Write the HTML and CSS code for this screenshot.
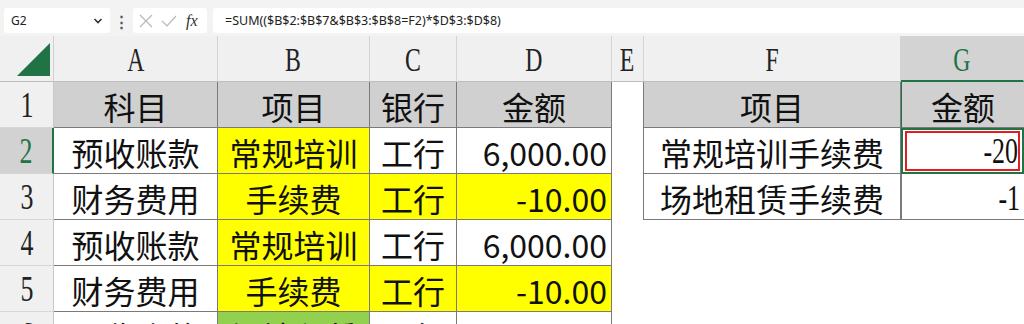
FILE: index.html
```html
<!DOCTYPE html>
<html>
<head>
<meta charset="utf-8">
<link rel="stylesheet" href="styles.css">
</head>
<body>
<div class="app">
  <div class="toolbar">
    <div class="namebox"><span>G2</span>
      <svg class="chev" width="10" height="8" viewBox="0 0 10 8"><path d="M1.5 2 L5 5.5 L8.5 2" fill="none" stroke="#333" stroke-width="1.6"/></svg>
    </div>
    <div class="dots">⋮</div>
    <div class="fxbox">
      <svg width="16" height="16" viewBox="0 0 16 16"><path d="M2 2 L14 14 M14 2 L2 14" stroke="#b8b8b8" stroke-width="1.2" fill="none"/></svg>
      <svg width="18" height="16" viewBox="0 0 18 16"><path d="M2 8 L7 13 L16 3" stroke="#b8b8b8" stroke-width="1.2" fill="none"/></svg>
      <span class="fx">fx</span>
    </div>
    <div class="formula">=SUM(($B$2:$B$7&amp;$B$3:$B$8=F2)*$D$3:$D$8)</div>
  </div>
  <div class="sheet">
    <div class="corner"><svg width="36" height="36" viewBox="0 0 36 36"><path d="M34 1 L34 34 L1 34 Z" fill="#217346"/></svg></div>
    <div class="ch"><span class="sl">A</span></div>
    <div class="ch"><span class="sl">B</span></div>
    <div class="ch"><span class="sl">C</span></div>
    <div class="ch"><span class="sl">D</span></div>
    <div class="ch"><span class="sl">E</span></div>
    <div class="ch"><span class="sl">F</span></div>
    <div class="ch ch-sel"><span class="sl">G</span></div>

    <div class="rh"><span class="sl">1</span></div>
    <div class="c hd">科目</div>
    <div class="c hd">项目</div>
    <div class="c hd">银行</div>
    <div class="c hd">金额</div>
    <div class="c blank e"></div>
    <div class="c hd f">项目</div>
    <div class="c hd g gsel1">金额</div>

    <div class="rh rh-sel"><span class="sl">2</span></div>
    <div class="c">预收账款</div>
    <div class="c yel">常规培训</div>
    <div class="c">工行</div>
    <div class="c num">6,000.00</div>
    <div class="c blank e"></div>
    <div class="c f">常规培训手续费</div>
    <div class="c g active"><span class="redbox"><span class="sl">-20</span></span></div>

    <div class="rh"><span class="sl">3</span></div>
    <div class="c">财务费用</div>
    <div class="c yel">手续费</div>
    <div class="c yel">工行</div>
    <div class="c num yel">-10.00</div>
    <div class="c blank e"></div>
    <div class="c f">场地租赁手续费</div>
    <div class="c g gnum"><span class="sl">-1</span></div>

    <div class="rh"><span class="sl">4</span></div>
    <div class="c">预收账款</div>
    <div class="c yel">常规培训</div>
    <div class="c">工行</div>
    <div class="c num">6,000.00</div>
    <div class="c blank"></div>
    <div class="c blank"></div>
    <div class="c blank"></div>

    <div class="rh"><span class="sl">5</span></div>
    <div class="c">财务费用</div>
    <div class="c yel">手续费</div>
    <div class="c yel">工行</div>
    <div class="c num yel">-10.00</div>
    <div class="c blank"></div>
    <div class="c blank"></div>
    <div class="c blank"></div>

    <div class="rh"><span class="sl">6</span></div>
    <div class="c">预收账款</div>
    <div class="c grn">场地租赁</div>
    <div class="c">工行</div>
    <div class="c num">600.00</div>
    <div class="c blank"></div>
    <div class="c blank"></div>
    <div class="c blank"></div>
  </div>
</div>
</body>
</html>
```

FILE: styles.css
```css
html, body {
  margin: 0;
  padding: 0;
  background: #ffffff;
}
.app {
  width: 1024px;
  height: 324px;
  overflow: hidden;
  font-family: "Noto Sans CJK SC", "Noto Sans", sans-serif;
}
.toolbar {
  height: 36px;
  background: #f3f3f3;
  display: flex;
  align-items: flex-start;
  padding-top: 8px;
  box-sizing: border-box;
}
.namebox {
  margin-left: 4px;
  width: 106px;
  height: 25px;
  background: #fff;
  border-radius: 3px;
  display: flex;
  align-items: center;
  justify-content: space-between;
  padding: 0 7px;
  box-sizing: border-box;
  font-family: "Noto Sans", sans-serif;
  font-size: 12px;
  color: #222;
}
.dots {
  width: 23px;
  text-align: center;
  color: #555;
  font-size: 15px;
  line-height: 25px;
  font-weight: bold;
}
.fxbox {
  width: 74px;
  height: 25px;
  background: #fff;
  border-radius: 3px;
  display: flex;
  align-items: center;
  padding-left: 5px;
  gap: 6px;
  box-sizing: border-box;
}
.fx {
  font-family: "Liberation Serif", serif;
  font-style: italic;
  font-size: 16px;
  color: #333;
  margin-left: 2px;
}
.formula {
  margin-left: 6px;
  flex: 1;
  height: 25px;
  background: #fff;
  border-radius: 3px 0 0 3px;
  font-family: "Noto Sans", sans-serif;
  font-size: 12.5px;
  line-height: 25px;
  padding-left: 12px;
  color: #222;
}
.sheet {
  display: grid;
  grid-template-columns: 54px 164px 152px 87px 155px 32px 257px 1fr;
  grid-template-rows: 46px repeat(6, 46px);
  background: #fff;
}
.sl {
  display: inline-block;
  font-family: "Liberation Serif", serif;
  font-weight: normal;
  transform: scaleX(0.72);
}
.corner {
  background: #f0f0f0;
  border-right: 1px solid #d0d0d0;
  border-bottom: 1px solid #bdbdbd;
  box-sizing: border-box;
  display: flex;
  align-items: flex-end;
  justify-content: flex-end;
  padding: 0 1px 3px 0;
}
.ch {
  background: #f0f0f0;
  border-right: 1px solid #d4d4d4;
  border-bottom: 1px solid #bdbdbd;
  box-sizing: border-box;
  display: flex;
  align-items: center;
  justify-content: center;
  font-size: 33px;
  color: #222;
  padding-top: 4px;
}
.ch-sel {
  background: #d3d3d3;
  color: #217346;
  border-bottom: 2px solid #217346;
}
.rh {
  background: #f0f0f0;
  border-right: 1px solid #c8c8c8;
  border-bottom: 1px solid #d6d6d6;
  box-sizing: border-box;
  display: flex;
  align-items: center;
  justify-content: center;
  font-size: 36px;
  color: #222;
}
.rh-sel {
  background: #d2d2d2;
  color: #217346;
  border-right: 2px solid #217346;
}
.c {
  box-sizing: border-box;
  border-right: 1px solid #7a7a7a;
  border-bottom: 1px solid #7a7a7a;
  display: flex;
  align-items: center;
  justify-content: center;
  font-size: 32px;
  color: #111;
  padding-top: 2px;
  white-space: nowrap;
  overflow: hidden;
}
.hd {
  background: #d0d0d0;
}
.yel {
  background: #ffff00;
}
.grn {
  background: #92d050;
}
.num {
  justify-content: flex-end;
  padding-right: 4px;
  font-size: 32px;
}
.blank {
  border-right: none;
  border-bottom: none;
}
.e {
  border-right: 1px solid #7a7a7a;
}
.g {
  border-right: none;
}
.gsel1 {
  border-left: 1px solid #217346;
}
.active {
  border: 2px solid #217346;
  padding: 1px 2px;
  justify-content: stretch;
  align-items: stretch;
}
.redbox {
  flex: 1;
  border: 2px solid #e02020;
  display: flex;
  align-items: center;
  justify-content: flex-end;
  font-size: 36px;
}
.gnum {
  justify-content: flex-end;
  font-size: 36px;
  padding-right: 4px;
  border-left: 1px solid #7a7a7a;
}
.redbox .sl, .gnum .sl {
  transform-origin: right center;
}
```
